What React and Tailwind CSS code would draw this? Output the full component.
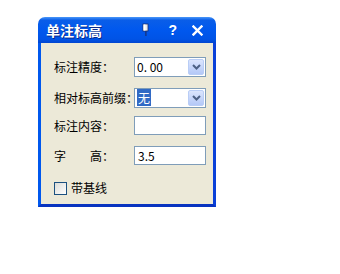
import React from "react";

const font = { fontFamily: '"Noto Sans CJK SC", "Noto Sans", sans-serif' };

function Chevron() {
  return (
    <svg width="9" height="6" viewBox="0 0 9 6">
      <path d="M1 1 L4.5 4.5 L8 1" fill="none" stroke="#4d6185" strokeWidth="2" />
    </svg>
  );
}

function Combo({ children }) {
  return (
    <div className="w-[72px] h-[20px] bg-white border border-[#7f9db9] flex items-center pl-[2px] pr-[1px]">
      <div className="flex-1 text-[12px] leading-[14px] text-black">{children}</div>
      <div className="w-[16px] h-[16px] rounded-[2px] border border-[#b9cdf6] bg-gradient-to-b from-[#dbe5fd] to-[#b4c8f7] flex items-center justify-center">
        <Chevron />
      </div>
    </div>
  );
}

function TextBox({ value }) {
  return (
    <div className="w-[72px] h-[19px] bg-white border border-[#7f9db9] flex items-center pl-[3px] text-[12px] text-black">
      {value}
    </div>
  );
}

export default function App() {
  return (
    <div className="w-[340px] h-[274px] bg-white pt-[17px] pl-[38px]" style={font}>
      <div className="w-[178px]">
        <div className="h-[26px] rounded-t-[7px] bg-[linear-gradient(to_bottom,#4a97f9_0%,#0a5ee8_12%,#0058ee_50%,#0053e6_85%,#0246d0_100%)] flex items-center pl-[8px] pr-[13px]">
          <span className="text-white font-bold text-[14px] leading-none [text-shadow:1px_1px_0_#0a2a8a]">单注标高</span>
          <div className="flex-1" />
          <div className="flex items-center">
            <svg width="8" height="14" viewBox="0 0 8 14" className="mr-[18px]">
              <rect x="1" y="1" width="5" height="7" fill="#e8e8e8" stroke="#1b2f70" strokeWidth="0.8" />
              <rect x="1.5" y="1.5" width="2" height="6" fill="#ffffff" />
              <rect x="3.3" y="8" width="1.2" height="5" fill="#1b2f70" />
            </svg>
            <span className="text-white font-bold text-[14px] leading-none mr-[15px]" style={{ fontFamily: '"Liberation Sans", sans-serif' }}>?</span>
            <svg width="11" height="11" viewBox="0 0 11 11">
              <path d="M1.5 1.5 L9.5 9.5 M9.5 1.5 L1.5 9.5" stroke="#ffffff" strokeWidth="2.4" strokeLinecap="square" />
            </svg>
          </div>
        </div>
        <div className="h-[164px] bg-[#0054e3] border-l-[3px] border-l-[#0058ee] border-r-[3px] border-r-[#0a40d8] border-b-[3px] border-b-[#0833c0]">
          <div className="h-full bg-[#ece9d8] pl-[13px] pt-[14px] text-[12px] text-black">
            <div className="flex items-center h-[20px]">
              <div className="w-[80px]">标注精度：</div>
              <Combo>0. 00</Combo>
            </div>
            <div className="flex items-center h-[20px] mt-[11px]">
              <div className="w-[80px] whitespace-nowrap">相对标高前缀：</div>
              <Combo>
                <span className="bg-[#316ac5] text-white px-[1px]">无</span>
              </Combo>
            </div>
            <div className="flex items-center h-[19px] mt-[8px]">
              <div className="w-[80px]">标注内容：</div>
              <TextBox value="" />
            </div>
            <div className="flex items-center h-[19px] mt-[11px]">
              <div className="w-[80px] flex">
                <span>字</span>
                <span className="w-[24px]" />
                <span>高：</span>
              </div>
              <TextBox value="3.5" />
            </div>
            <div className="flex items-center mt-[14px]">
              <div className="w-[13px] h-[13px] border border-[#1c5180] bg-gradient-to-br from-[#dcdcd7] to-[#ffffff]" />
              <span className="ml-[4px]">带基线</span>
            </div>
          </div>
        </div>
      </div>
    </div>
  );
}
